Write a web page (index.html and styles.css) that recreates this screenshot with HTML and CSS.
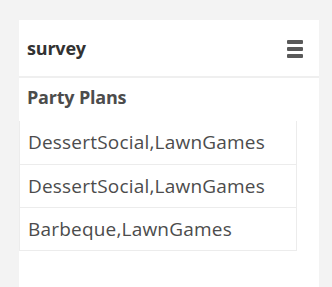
FILE: index.html
```html
<!DOCTYPE html>
<html>
<head>
<meta charset="utf-8">
<link rel="stylesheet" href="styles.css">
</head>
<body>
<div class="panel">
  <header class="header">
    <h1 class="title">survey</h1>
    <button class="menu" aria-label="Menu">
      <span class="bar"></span><span class="bar"></span><span class="bar"></span>
    </button>
  </header>
  <section class="section">
    <h2 class="section-title">Party Plans</h2>
    <ul class="list">
      <li class="row">DessertSocial,LawnGames</li>
      <li class="row">DessertSocial,LawnGames</li>
      <li class="row">Barbeque,LawnGames</li>
    </ul>
  </section>
</div>
</body>
</html>
```
FILE: styles.css
```css
html, body {
  margin: 0;
  padding: 0;
  height: 100%;
}
body {
  background: #f3f3f3;
  font-family: "Open Sans", "Liberation Sans", sans-serif;
  color: #4c4c4c;
}
.panel {
  margin: 20px 0 0 19px;
  width: 300px;
  min-height: calc(100% - 20px);
  background: #ffffff;
}
.header {
  height: 58px;
  box-sizing: border-box;
  padding: 0 16px 0 8px;
  display: flex;
  align-items: center;
  justify-content: space-between;
  border-bottom: 2px solid #efefef;
}
.title {
  margin: 0;
  font-size: 18px;
  font-weight: 700;
  letter-spacing: -0.2px;
  color: #323232;
}
.menu {
  border: 0;
  background: none;
  padding: 0;
  display: flex;
  flex-direction: column;
  gap: 3px;
  margin-top: 1px;
}
.bar {
  display: block;
  width: 16px;
  height: 4px;
  border-radius: 1px;
  background: #595959;
}
.section-title {
  margin: 0;
  height: 43px;
  box-sizing: border-box;
  padding: 7px 8px 0;
  font-size: 18px;
  font-weight: 700;
  letter-spacing: -0.2px;
  color: #4c4c4c;
}
.list {
  list-style: none;
  margin: 0;
  padding: 0;
  width: 278px;
  border: 1px solid #ececec;
  border-top: 0;
  box-sizing: border-box;
}
.row {
  height: 43px;
  box-sizing: border-box;
  padding: 8px 8px 0;
  font-size: 19px;
  font-weight: 400;
  letter-spacing: 0.2px;
  color: #4c4c4c;
  border-top: 1px solid #ececec;
}
.row:first-child {
  border-top: 0;
}
```
